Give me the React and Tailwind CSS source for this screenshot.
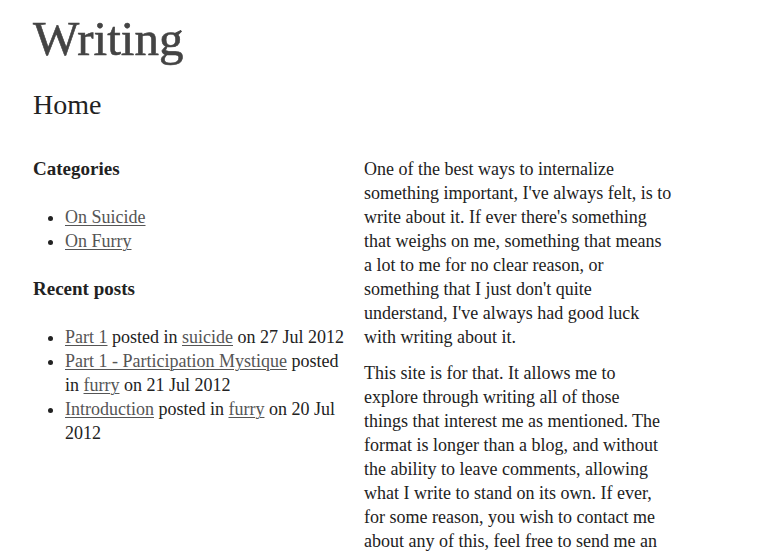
import React from 'react';

const categories = ["On Suicide", "On Furry"];

const posts = [
    { title: "Part 1", cat: "suicide", date: "27 Jul 2012" },
    { title: "Part 1 - Participation Mystique", cat: "furry", date: "21 Jul 2012" },
    { title: "Introduction", cat: "furry", date: "20 Jul 2012" },
];

const Link = ({ children }) => (
    <a href="#" className="text-[#555] underline decoration-1 underline-offset-2">{children}</a>
);

const App = () => {
    return (
        <div className="h-screen overflow-hidden bg-white text-[#222] font-['Liberation_Serif',serif] text-[18px] leading-[24px]">
            <div className="pl-[33px]">
                <h1 className="pt-[15px] text-[49px] leading-[48px] text-[#444] [-webkit-text-stroke:0.6px_#444]">Writing</h1>
                <h2 className="mt-[28px] text-[28px] leading-[28px]">Home</h2>

                <div className="mt-[38px] grid grid-cols-[331px_308px]">
                    <div>
                        <h3 className="font-bold text-[19px]">Categories</h3>
                        <ul className="mt-6 list-disc pl-8">
                            {categories.map((c) => (
                                <li key={c}><Link>{c}</Link></li>
                            ))}
                        </ul>

                        <h3 className="mt-6 font-bold text-[19px]">Recent posts</h3>
                        <ul className="mt-6 list-disc pl-8 pr-2">
                            {posts.map((p, idx) => (
                                <li key={idx}>
                                    <Link>{p.title}</Link> posted in <Link>{p.cat}</Link> on {p.date}
                                </li>
                            ))}
                        </ul>
                    </div>

                    <div>
                        <p>
                            One of the best ways to internalize something important, I've always felt, is to
                            write about it. If ever there's something that weighs on me, something that means
                            a lot to me for no clear reason, or something that I just don't quite understand,
                            I've always had good luck with writing about it.
                        </p>
                        <p className="mt-3 w-[299px]">
                            This site is for that. It allows me to explore through writing all of those things
                            that interest me as mentioned. The format is longer than a blog, and without the
                            ability to leave comments, allowing what I write to stand on its own. If ever, for
                            some reason, you wish to contact me about any of this, feel free to send me an
                            email.
                        </p>
                    </div>
                </div>
            </div>
        </div>
    );
}

export default App;
